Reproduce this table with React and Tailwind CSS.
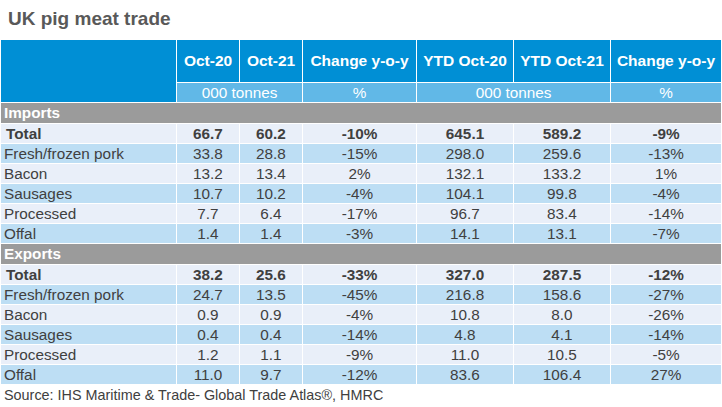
const imports = [
  ["Total", "66.7", "60.2", "-10%", "645.1", "589.2", "-9%"],
  ["Fresh/frozen pork", "33.8", "28.8", "-15%", "298.0", "259.6", "-13%"],
  ["Bacon", "13.2", "13.4", "2%", "132.1", "133.2", "1%"],
  ["Sausages", "10.7", "10.2", "-4%", "104.1", "99.8", "-4%"],
  ["Processed", "7.7", "6.4", "-17%", "96.7", "83.4", "-14%"],
  ["Offal", "1.4", "1.4", "-3%", "14.1", "13.1", "-7%"],
];

const exports = [
  ["Total", "38.2", "25.6", "-33%", "327.0", "287.5", "-12%"],
  ["Fresh/frozen pork", "24.7", "13.5", "-45%", "216.8", "158.6", "-27%"],
  ["Bacon", "0.9", "0.9", "-4%", "10.8", "8.0", "-26%"],
  ["Sausages", "0.4", "0.4", "-14%", "4.8", "4.1", "-14%"],
  ["Processed", "1.2", "1.1", "-9%", "11.0", "10.5", "-5%"],
  ["Offal", "11.0", "9.7", "-12%", "83.6", "106.4", "27%"],
];

const headers = ["Oct-20", "Oct-21", "Change y-o-y", "YTD Oct-20", "YTD Oct-21", "Change y-o-y"];

const Section = ({ title, rows }) => (
  <>
    <div className="col-span-7 h-[20px] bg-[#9b9b9b] pl-[3px] flex items-center font-bold text-white">
      {title}
    </div>
    {rows.map((r, i) => {
      const bg = i % 2 === 0 ? "bg-[#e9eff9]" : "bg-[#bddef4]";
      const weight = i === 0 ? "font-bold" : "";
      return r.map((cell, j) => (
        <div
          key={`${i}-${j}`}
          className={`h-[19px] flex items-center ${bg} ${weight} ${
            j === 0 ? (i === 0 ? "pl-[5px]" : "pl-[3px]") : "justify-center"
          }`}
        >
          {cell}
        </div>
      ));
    })}
  </>
);

export default function App() {
  return (
    <div
      className="w-[722px] h-[407px] bg-white text-[#404040] text-[15.3px] leading-none overflow-hidden"
      style={{ fontFamily: '"Liberation Sans", Arial, sans-serif' }}
    >
      <div className="h-[40px] pl-[8px] pt-[9px] text-[19px] font-bold text-[#595959]">
        UK pig meat trade
      </div>
      <div className="ml-px w-[720px] grid grid-cols-[175px_62px_62px_113px_96px_96px_110px] gap-px bg-white">
        <div className="row-span-2 bg-[#008fd5]" />
        {headers.map((h, i) => (
          <div
            key={i}
            className="h-[42px] bg-[#008fd5] flex items-center justify-center font-bold text-white text-[15.5px] whitespace-nowrap"
          >
            {h}
          </div>
        ))}
        <div className="col-span-2 h-[19px] bg-[#61b8e7] flex items-center justify-center text-white">000 tonnes</div>
        <div className="h-[19px] bg-[#61b8e7] flex items-center justify-center text-white">%</div>
        <div className="col-span-2 h-[19px] bg-[#61b8e7] flex items-center justify-center text-white">000 tonnes</div>
        <div className="h-[19px] bg-[#61b8e7] flex items-center justify-center text-white">%</div>
        <Section title="Imports" rows={imports} />
        <Section title="Exports" rows={exports} />
      </div>
      <div className="pl-[4px] pt-[4px] text-[14.4px] whitespace-nowrap">
        Source: IHS Maritime &amp; Trade- Global Trade Atlas®, HMRC
      </div>
    </div>
  );
}
